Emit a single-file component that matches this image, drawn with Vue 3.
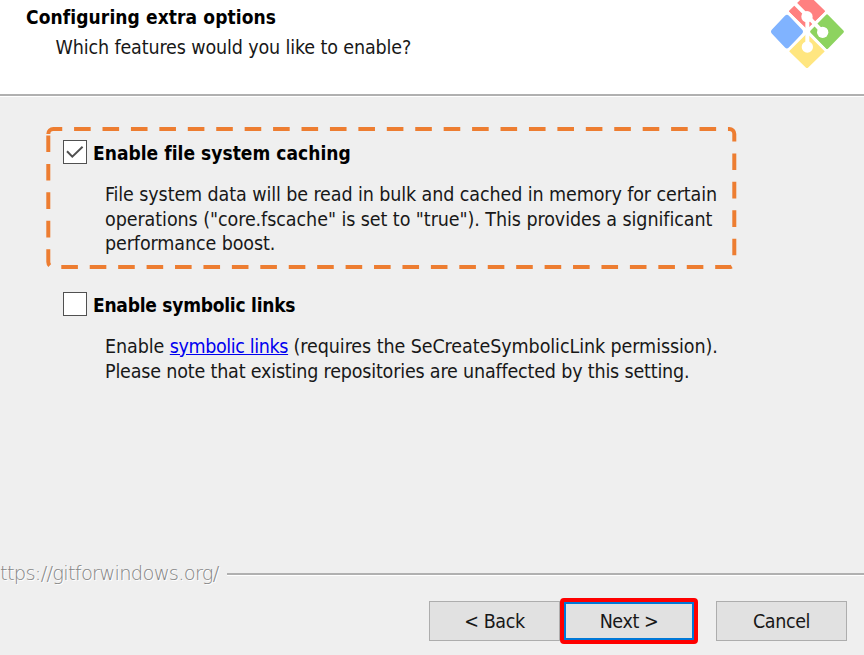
<script setup>
const options = [
  {
    title: 'Enable file system caching',
    checked: true,
    key: 'cache',
    lines: [
      'File system data will be read in bulk and cached in memory for certain',
      'operations ("core.fscache" is set to "true"). This provides a significant',
      'performance boost.',
    ],
  },
  { title: 'Enable symbolic links', checked: false, key: 'links', lines: [] },
]
</script>

<template>
  <div class="wizard">
    <header class="header">
      <div class="headings">
        <h1>Configuring extra options</h1>
        <p>Which features would you like to enable?</p>
      </div>
      <svg class="logo" viewBox="0 0 330 282" width="110" height="94">
        <rect x="-38" y="-38" width="76" height="76" rx="9" fill="#80b3ff" transform="translate(99 95) scale(.95 1) rotate(45)" />
        <rect x="-38" y="-38" width="76" height="76" rx="5" fill="#ff8080" transform="translate(159 34) scale(1.04 1) rotate(45)" />
        <rect x="-38" y="-38" width="76" height="76" rx="5" fill="#8dd35f" transform="translate(219 95) scale(.98 1) rotate(45)" />
        <rect x="-38" y="-38" width="76" height="76" rx="5" fill="#ffe680" transform="translate(159 152) scale(1.04 1) rotate(45)" />
        <g fill="none" stroke="#fff">
          <path d="M96 32 L220 156 M222 32 L97 156" stroke-width="8" />
          <path d="M120 8 L159 47 L206 96 M160 47 V140" stroke-width="12" />
        </g>
        <g fill="#fff">
          <circle cx="159" cy="50" r="17" />
          <circle cx="206" cy="97" r="17" />
          <circle cx="160" cy="141" r="17" />
        </g>
      </svg>
    </header>

    <main class="content">
      <section v-for="o in options" :key="o.key" class="option" :class="o.key">
        <svg v-if="o.checked" class="highlight" width="700" height="150" viewBox="40 120 700 150">
          <path
            d="M48.3 134 A5 5 0 0 1 53.3 129 H729.3 A5 5 0 0 1 734.3 134 V262 A5 5 0 0 1 729.3 267 H53.3 A5 5 0 0 1 48.3 262 Z"
            fill="none" stroke="#ed7d31" stroke-width="4" stroke-dasharray="16.6 11.83"
          />
        </svg>
        <div class="label">
          <span class="box">
            <svg v-if="o.checked" width="21" height="21" viewBox="0 0 21 21">
              <path d="M3 10.3 L8.3 15.6 L18.6 5.8" fill="none" stroke="#505050" stroke-width="2" />
            </svg>
          </span>
          <strong>{{ o.title }}</strong>
        </div>
        <div class="desc">
          <template v-if="o.checked">
            <div v-for="(l, i) in o.lines" :key="i" :class="'c' + i">{{ l }}</div>
          </template>
          <template v-else>
            <div class="l0">Enable <a>symbolic links</a> (requires the SeCreateSymbolicLink permission).</div>
            <div class="l1">Please note that existing repositories are unaffected by this setting.</div>
          </template>
        </div>
      </section>
    </main>

    <div class="divider"><span class="url">ttps://gitforwindows.org/</span><i></i></div>

    <footer class="footer">
      <button class="back">&lt; Back</button>
      <button class="next">Next &gt;</button>
      <button class="cancel">Cancel</button>
    </footer>
  </div>
</template>

<style>
body { background: #efefef; overflow: hidden; }
</style>

<style scoped>
.wizard {
  width: 864px;
  height: 655px;
  display: flex;
  flex-direction: column;
  overflow: hidden;
  background: #efefef;
  color: #181818;
  font-family: "DejaVu Sans Condensed", "DejaVu Sans", sans-serif;
  font-stretch: condensed;
  font-size: 19.5px;
  line-height: 24.5px;
  white-space: nowrap;
}
.header {
  display: flex;
  justify-content: space-between;
  height: 94px;
  background: #fff;
  border-bottom: 2px solid #b0b0b0;
  box-shadow: 0 1px #fff;
}
.headings { padding: 5px 0 0 26px; }
h1 { margin: 0; font-size: 19px; line-height: 24px; color: #000; letter-spacing: 0.1px; }
p { margin: 7px 0 0 29.5px; letter-spacing: -0.13px; }
.content { height: 463px; box-sizing: border-box; padding: 43px 0 0 62px; }
.option { position: relative; height: 152px; }
.highlight { position: absolute; left: -22px; top: -19px; }
.label { display: flex; align-items: center; gap: 6px; height: 26px; padding-left: 1px; }
.label strong { font-size: 19px; color: #000; padding-top: 2px; letter-spacing: 0.03px; }
.links strong { letter-spacing: -0.24px; }
.box { width: 22px; height: 22px; background: #fff; border: 1.5px solid #505050; display: flex; }
.desc { padding: 18px 0 0 43px; letter-spacing: -0.1px; }
.desc .c1 { letter-spacing: -0.07px; }
.desc .l0 { letter-spacing: -0.08px; }
.desc .l1 { letter-spacing: -0.18px; }
a { color: #0000f0; text-decoration: underline; letter-spacing: -0.38px; }
.divider { display: flex; align-items: center; height: 30px; color: #858585; }
.url {
  width: 219px;
  text-shadow: 1px 1px #fff;
  font-family: "DejaVu Sans Light", "DejaVu Sans", sans-serif;
  font-stretch: normal;
  font-weight: 200;
  letter-spacing: -0.75px;
}
.divider i { flex: 1; height: 2px; margin-left: 8px; background: #b0b0b0; box-shadow: 0 1px #fff; }
.footer { display: flex; padding: 9px 0 0 429px; align-items: flex-start; }
button {
  width: 131px;
  height: 40px;
  margin: 3px 0 0;
  padding: 2px 0 0;
  border: 1.5px solid #adadad;
  background: #e1e1e1;
  color: #181818;
  font: inherit;
  letter-spacing: -0.4px;
}
.next { width: 138px; height: 46px; margin: 0; border: 4px solid #fe0000; border-radius: 4px; box-shadow: inset 0 0 0 2px #0078d7; }
.cancel { margin-left: 18px; }
</style>
